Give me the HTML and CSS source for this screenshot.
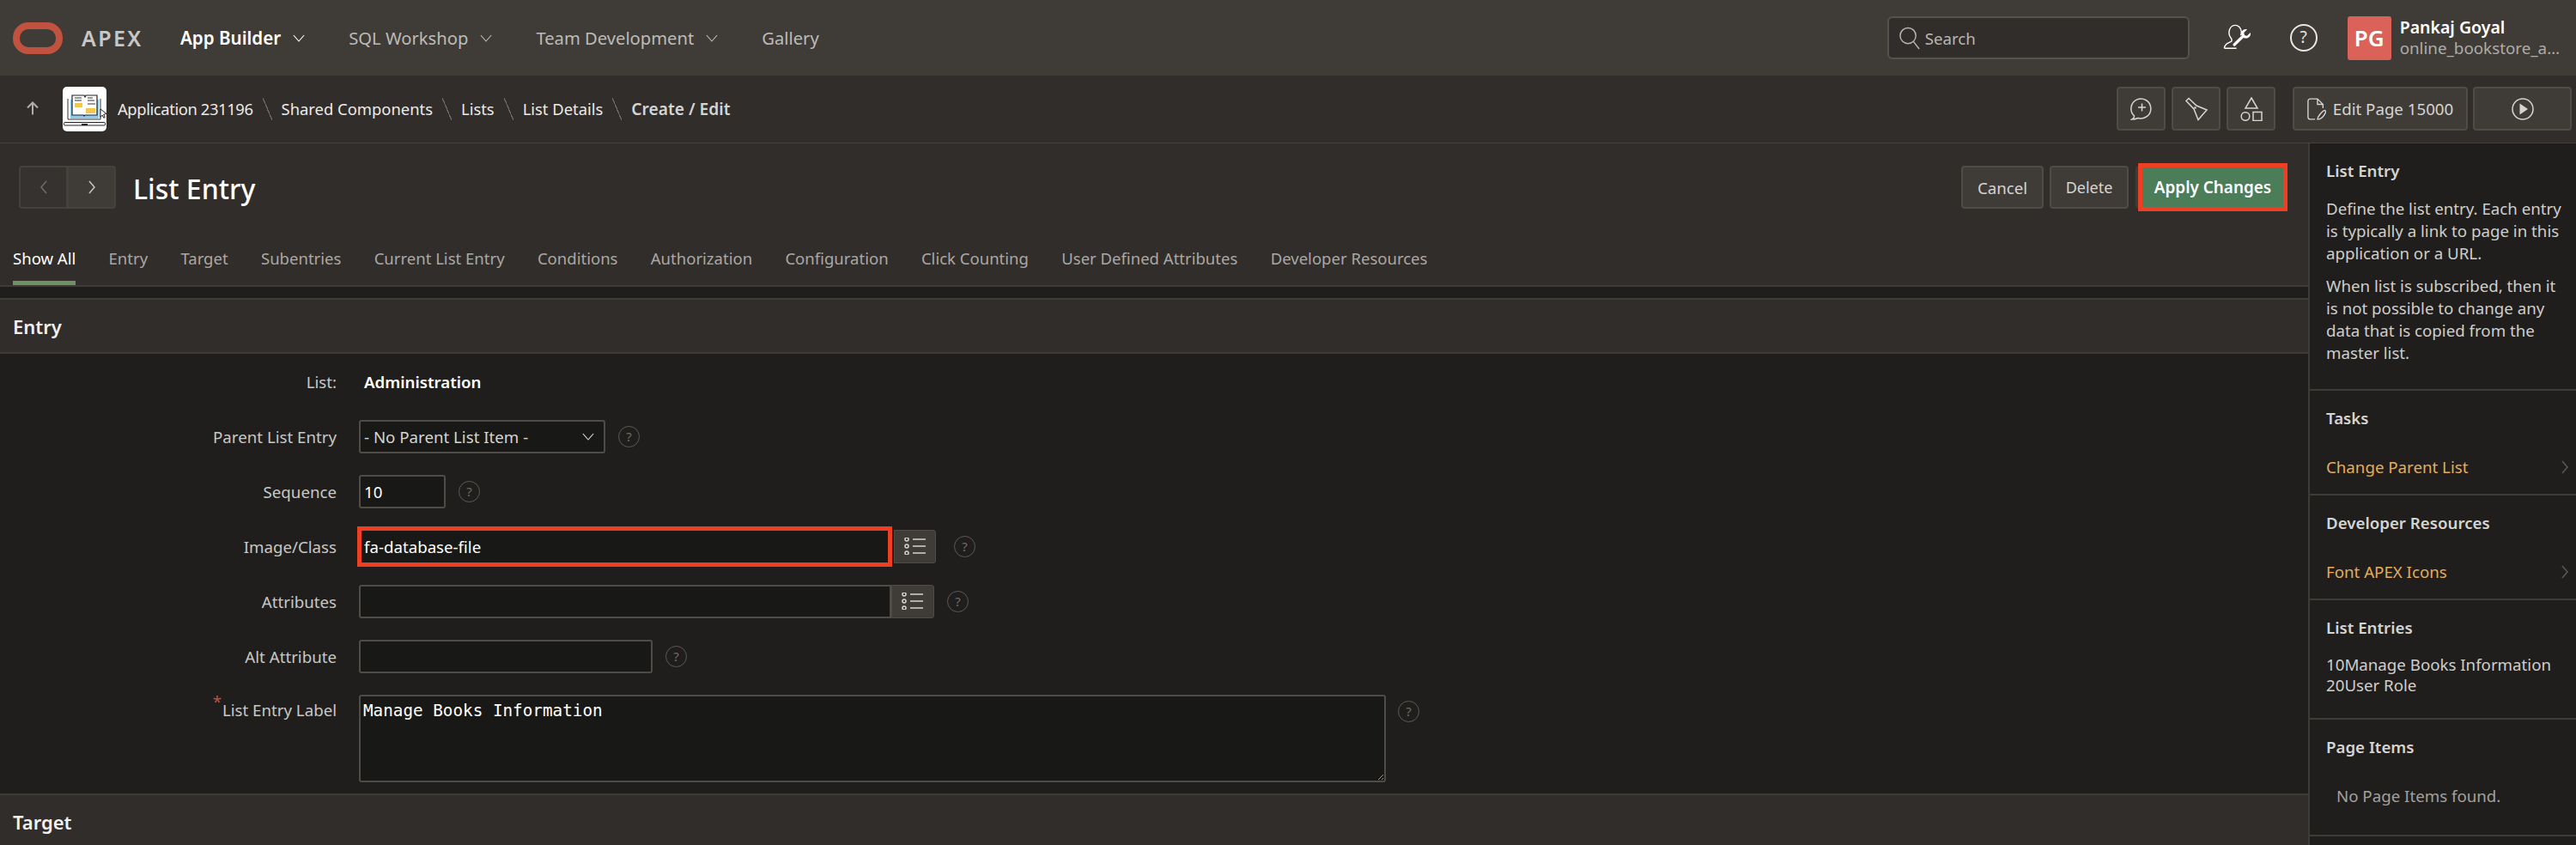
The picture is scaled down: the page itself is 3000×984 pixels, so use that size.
FILE: index.html
```html
<!DOCTYPE html>
<html lang="en">
<head>
    <meta charset="UTF-8">
    <title>List Entry</title>
    <link rel="stylesheet" href="styles.css">
</head>
<body>
    <!-- Top bar -->
    <header class="topbar">
        <div class="logo"></div>
        <div class="brand">APEX</div>
        <nav class="mainnav">
            <a class="navitem active">App Builder <svg class="chev" viewBox="0 0 16 10"><path d="M1 1l7 8 7-8"/></svg></a>
            <a class="navitem">SQL Workshop <svg class="chev" viewBox="0 0 16 10"><path d="M1 1l7 8 7-8"/></svg></a>
            <a class="navitem">Team Development <svg class="chev" viewBox="0 0 16 10"><path d="M1 1l7 8 7-8"/></svg></a>
            <a class="navitem">Gallery</a>
        </nav>
        <div class="search">
            <svg class="search-icon" viewBox="0 0 26 28"><circle cx="11" cy="11" r="9.500"/><path d="M17.500 18l7 9"/></svg>
            <span>Search</span>
        </div>
        <svg class="usertool" viewBox="0 0 36 34"><path d="M1.500 30c0-5 4-6 8-8 1.500-.8 1.500-3 .5-4.200-2.200-2.500-3-5.300-2.600-8.300C8 5 11 1.500 15 1.500s7 3.500 7.500 7.500c.2 1.800 0 3.500-.7 5M1.500 30h15"/><path class="fill" d="M33.800 10.500l-4.300 4-3-.8-.8-3 4-4c-3-1-6.300.8-7 3.700-.3 1.300-.1 2.500.4 3.600L12.500 24.500c-1.300 1.300.8 3.700 2.300 2.500L25.200 17c3.200 1.400 7 .2 8.400-3 .4-1 .5-2.400.2-3.500z"/></svg>
        <div class="help-top">?</div>
        <div class="avatar">PG</div>
        <div class="userinfo">
            <div class="username">Pankaj Goyal</div>
            <div class="userapp">online_bookstore_a…</div>
        </div>
    </header>

    <!-- Breadcrumb bar -->
    <div class="subbar">
        <svg class="uparrow" viewBox="0 0 14 16"><path d="M7 15.500V1.500M1 7.500l6-6 6 6"/></svg>
        <svg class="appicon" viewBox="0 0 51 52">
            <rect width="51" height="52" rx="5" fill="#fff" stroke="none"/>
            <path d="M6 14v24h38V14" fill="none" stroke="#333" stroke-width="1"/>
            <rect x="9" y="15" width="33" height="22" fill="#8ecbee" stroke="none"/>
            <path d="M11 10h14l1 2 1-2h13v23H26l-1 1-1-1H11z" fill="#fff" stroke="#222" stroke-width="1.200"/>
            <path d="M14 13h8M14 16h8M29 13h6M29 16h8M29 20h9" stroke="#333" stroke-width="1"/>
            <rect x="14" y="19" width="9" height="5" fill="#f4c64e" stroke="none"/>
            <rect x="27" y="25" width="11" height="6" fill="#f4c64e" stroke="none"/>
            <rect x="1.500" y="41.500" width="48" height="3.500" rx="1" fill="#fff" stroke="#222" stroke-width="1"/>
            <rect x="22" y="43" width="7" height="2" fill="#222" stroke="none"/>
            <path d="M44 26l7 5.500-3.300.8 1.600 3.200-1.500.8-1.700-3.200-2.200 2.400z" fill="#fff" stroke="#222" stroke-width="1"/>
        </svg>
        <a class="crumb app">Application 231196</a><i class="slash"></i>
        <a class="crumb">Shared Components</a><i class="slash"></i>
        <a class="crumb">Lists</a><i class="slash"></i>
        <a class="crumb">List Details</a><i class="slash"></i>
        <span class="crumb current">Create / Edit</span>
        <div class="subbar-tools">
            <button class="tool">
                <svg viewBox="0 0 26 28"><path d="M2 26c1.800-1 2.500-2 2.600-4A11.500 11.500 0 1 1 9 24.500c-2 .8-4.500 1.500-7 1.500z"/><path d="M13.500 7.500v9M9 12h9"/></svg>
            </button>
            <button class="tool">
                <svg viewBox="0 0 26 28"><path d="M1 4.500L4 1.500l9 8.500 12 5-10 11.500-5-12.500z"/><circle cx="11.500" cy="12.500" r=".6"/></svg>
            </button>
            <button class="tool">
                <svg viewBox="0 0 26 28"><path d="M13 1l7 12H6z"/><circle cx="6" cy="22.500" r="4.800"/><rect x="15" y="17.500" width="10" height="10"/></svg>
            </button>
            <button class="tool wide">
                <svg class="pageicon" viewBox="0 0 24 28"><path d="M10 27H4a3 3 0 0 1-3-3V4a3 3 0 0 1 3-3h9l7 7v5M13 1v7h7"/><path d="M13 27c0-3 5-9 8-11 2-1 3 1 2 3-1.500 3-5 7-8 8z"/></svg>
                Edit Page 15000
            </button>
            <button class="tool run">
                <svg viewBox="0 0 26 26"><circle cx="13" cy="13" r="12"/><path class="fill" d="M9.500 6.500L19 13l-9.500 6.500z"/></svg>
            </button>
        </div>
    </div>

    <div class="content">
        <main class="main">
            <div class="titlebar">
                <div class="pager">
                    <button class="pagebtn"><svg viewBox="0 0 10 16"><path d="M8 1L2 8l6 7"/></svg></button>
                    <button class="pagebtn next"><svg viewBox="0 0 10 16"><path d="M2 1l6 7-6 7"/></svg></button>
                </div>
                <h1>List Entry</h1>
                <div class="actions">
                    <button class="btn cancel">Cancel</button>
                    <button class="btn delete">Delete</button>
                    <div class="apply-wrap"><button class="btn-apply">Apply Changes</button></div>
                </div>
            </div>

            <div class="tabs">
                <a class="tab selected">Show All</a>
                <a class="tab">Entry</a>
                <a class="tab">Target</a>
                <a class="tab">Subentries</a>
                <a class="tab">Current List Entry</a>
                <a class="tab">Conditions</a>
                <a class="tab">Authorization</a>
                <a class="tab">Configuration</a>
                <a class="tab">Click Counting</a>
                <a class="tab">User Defined Attributes</a>
                <a class="tab">Developer Resources</a>
            </div>

            <h2 class="region-head first">Entry</h2>
            <div class="form">
                <div class="row">
                    <label>List:</label>
                    <strong class="readonly">Administration</strong>
                </div>
                <div class="row">
                    <label>Parent List Entry</label>
                    <div class="select">
                        <span>- No Parent List Item -</span>
                        <svg class="chev" viewBox="0 0 16 10"><path d="M1 1l7 8 7-8"/></svg>
                    </div>
                    <span class="help">?</span>
                </div>
                <div class="row">
                    <label>Sequence</label>
                    <input class="field seq" type="text" value="10">
                    <span class="help">?</span>
                </div>
                <div class="row">
                    <label>Image/Class</label>
                    <input class="field marked" type="text" value="fa-database-file">
                    <button class="listbtn"><svg viewBox="0 0 26 20"><circle cx="3" cy="2" r="2"/><circle cx="3" cy="10" r="2"/><circle cx="3" cy="18" r="2"/><path d="M10 2h15M10 10h15M10 18h15"/></svg></button>
                    <span class="help wide-gap">?</span>
                </div>
                <div class="row">
                    <label>Attributes</label>
                    <input class="field attr" type="text">
                    <button class="listbtn joined"><svg viewBox="0 0 26 20"><circle cx="3" cy="2" r="2"/><circle cx="3" cy="10" r="2"/><circle cx="3" cy="18" r="2"/><path d="M10 2h15M10 10h15M10 18h15"/></svg></button>
                    <span class="help">?</span>
                </div>
                <div class="row">
                    <label>Alt Attribute</label>
                    <input class="field alt" type="text">
                    <span class="help">?</span>
                </div>
                <div class="row tall">
                    <label class="required">List Entry Label</label>
                    <textarea class="field area">Manage Books Information</textarea>
                    <span class="help">?</span>
                </div>
            </div>
            <h2 class="region-head">Target</h2>
        </main>

        <aside class="side">
            <section class="side-sec intro">
                <h3>List Entry</h3>
                <p>Define the list entry. Each entry is typically a link to page in this application or a URL.</p>
                <p>When list is subscribed, then it is not possible to change any data that is copied from the master list.</p>
            </section>
            <section class="side-sec">
                <h3>Tasks</h3>
                <a class="side-link">Change Parent List <svg viewBox="0 0 10 16"><path d="M2 1l6 7-6 7"/></svg></a>
            </section>
            <section class="side-sec">
                <h3>Developer Resources</h3>
                <a class="side-link">Font APEX Icons <svg viewBox="0 0 10 16"><path d="M2 1l6 7-6 7"/></svg></a>
            </section>
            <section class="side-sec entries">
                <h3>List Entries</h3>
                <div class="entry-list">10Manage Books Information<br>20User Role</div>
            </section>
            <section class="side-sec items">
                <h3>Page Items</h3>
                <div class="no-items">No Page Items found.</div>
            </section>
        </aside>
    </div>
</body>
</html>
```

FILE: styles.css
```css
/* Base */
* {
    box-sizing: border-box;
}

html {
    height: 984px;
    overflow: hidden;
}

body {
    margin: 0;
    height: 984px;
    overflow: hidden;
    display: flex;
    flex-direction: column;
    font-family: "Noto Sans", "Open Sans", sans-serif;
    font-size: 18.7px;
    color: #d6d4d1;
    background-color: #1f1e1d;
}

svg {
    fill: none;
    stroke: currentColor;
    stroke-width: 1.5;
    display: block;
}

svg .fill {
    fill: currentColor;
    stroke: none;
}

.chev {
    width: 14px;
    height: 9px;
    stroke-width: 1.3;
}

/* Top bar */
.topbar {
    height: 88px;
    flex: none;
    display: flex;
    align-items: center;
    padding: 0 19px 0 15px;
    background-color: #3f3c38;
}

.logo {
    width: 58px;
    height: 37px;
    border: 8px solid #c0523f;
    border-radius: 18px;
}

.brand {
    margin-left: 22px;
    width: 115px;
    font-size: 25px;
    font-weight: 600;
    letter-spacing: 2.4px;
    color: #c9c7c4;
}

.mainnav {
    display: flex;
    align-items: center;
    gap: 51px;
}

.navitem {
    display: flex;
    align-items: center;
    gap: 14px;
    font-size: 20.2px;
    color: #bdbbb7;
}

.navitem.active {
    font-size: 20.6px;
    font-weight: 600;
    color: #fff;
}

.search {
    margin-left: auto;
    width: 352px;
    height: 50px;
    display: flex;
    align-items: center;
    gap: 5px;
    padding-left: 11px;
    color: #b8b6b2;
    background-color: #312d2a;
    border: 2px solid #55524e;
    border-radius: 6px;
}

.search-icon {
    width: 26px;
    height: 27px;
}

.usertool {
    width: 34px;
    height: 32px;
    margin-left: 39px;
    color: #fff;
}

.help-top {
    width: 32px;
    height: 32px;
    margin-left: 44px;
    border: 2px solid #e8e6e3;
    border-radius: 50%;
    text-align: center;
    font-size: 19px;
    line-height: 27px;
    color: #e8e6e3;
}

.avatar {
    width: 51px;
    height: 51px;
    margin-left: 35px;
    display: flex;
    align-items: center;
    justify-content: center;
    border-radius: 3px;
    font-size: 26px;
    font-weight: 600;
    color: #fff;
    background-color: #da6258;
}

.userinfo {
    margin-left: 10px;
    line-height: 25px;
}

.username {
    font-size: 19.5px;
    font-weight: 600;
    color: #fff;
}

.userapp {
    font-size: 18.8px;
    color: #aeaca8;
}

/* Breadcrumb bar */
.subbar {
    height: 79px;
    flex: none;
    display: flex;
    align-items: center;
    padding: 0 5px 1px 31px;
    background-color: #312d2a;
    border-bottom: 1px solid #45423e;
}

.uparrow {
    width: 14px;
    height: 16px;
    margin-top: -2px;
    stroke-width: 2;
    color: #b0aeaa;
}

.appicon {
    width: 51px;
    height: 52px;
    margin: 0 13px 0 28px;
}

.crumb {
    font-size: 18.4px;
    color: #eceae7;
}

.crumb.app {
    letter-spacing: -0.4px;
}

.crumb.current {
    font-size: 19.2px;
    font-weight: 600;
    color: #d6d4d1;
}

.slash {
    width: 11px;
    height: 26px;
    margin: 0 11px;
    background: linear-gradient(to bottom left, transparent 47%, #6e6b66 47%, #6e6b66 53%, transparent 53%);
}

.subbar-tools {
    margin-left: auto;
    display: flex;
    gap: 7px;
}

.tool {
    width: 57px;
    height: 51px;
    display: flex;
    align-items: center;
    justify-content: center;
    gap: 8px;
    padding: 0;
    font-family: inherit;
    font-size: 18.7px;
    color: #d6d4d1;
    background-color: #3f3c38;
    border: 2px solid #4f4c48;
    border-radius: 4px;
}

.tool svg {
    width: 26px;
    height: 28px;
}

.tool.wide {
    width: 204px;
    margin-left: 13px;
}

.tool .pageicon {
    width: 22px;
    height: 28px;
}

.tool.run {
    width: 115px;
    margin-left: -1px;
}

/* Main column */
.content {
    flex: 1;
    display: flex;
    min-height: 0;
}

.main {
    width: 2688px;
    flex: none;
    overflow: hidden;
}

.titlebar {
    height: 113px;
    display: flex;
    align-items: flex-start;
    padding: 26px 24px 0 22px;
    background-color: #312d2a;
}

.pager {
    display: flex;
}

.pagebtn {
    width: 57px;
    height: 50px;
    display: flex;
    align-items: center;
    justify-content: center;
    padding: 0;
    color: #706d68;
    background-color: #35322f;
    border: 2px solid #45423e;
    border-radius: 4px 0 0 4px;
}

.pagebtn svg {
    width: 10px;
    height: 16px;
}

.pagebtn.next {
    margin-left: -1px;
    color: #c8c6c2;
    background-color: #3f3c38;
    border-radius: 0 4px 4px 0;
}

h1 {
    margin: 0 0 0 20px;
    font-size: 32px;
    font-weight: 500;
    line-height: 54px;
    color: #fff;
}

.actions {
    margin-left: auto;
    display: flex;
    align-items: center;
    gap: 7px;
}

.btn {
    height: 50px;
    padding: 0;
    font-family: inherit;
    font-size: 18.7px;
    color: #d6d4d1;
    background-color: #3f3c38;
    border: 2px solid #4f4c48;
    border-radius: 4px;
}

.btn.cancel {
    width: 96px;
}

.btn.delete {
    width: 92px;
    font-size: 18px;
}

.apply-wrap {
    height: 50px;
    margin-left: 1px;
    padding-left: 3px;
    display: flex;
    align-items: center;
    background-color: #3f3c38;
    border-radius: 4px 0 0 4px;
}

.btn-apply {
    width: 174px;
    height: 56px;
    padding: 0;
    font-family: inherit;
    font-size: 18.9px;
    font-weight: 600;
    color: #fff;
    background-color: #4b7d58;
    border: 5px solid #ee3f23;
}

/* Tabs */
.tabs {
    height: 54px;
    display: flex;
    gap: 38.3px;
    padding-left: 15px;
    font-size: 18.55px;
    background-color: #312d2a;
    border-bottom: 2px solid #3f3c38;
}

.tab {
    height: 52px;
    padding-top: 8px;
    color: #aaa8a4;
}

.tab.selected {
    color: #fff;
    border-bottom: 5px solid #6f9265;
}

/* Regions */
.region-head {
    height: 65px;
    margin: 0;
    padding: 0 15px;
    display: flex;
    align-items: center;
    font-size: 22px;
    font-weight: 600;
    color: #f2f0ed;
    background-color: #312d2a;
    border-top: 2px solid #3f3c38;
    border-bottom: 2px solid #3f3c38;
}

.region-head.first {
    margin-top: 13px;
}

.row {
    height: 64px;
    display: flex;
    align-items: center;
}

.row.tall {
    height: 128px;
    align-items: flex-start;
    padding-top: 13px;
}

.row label {
    width: 392px;
    margin-right: 26px;
    text-align: right;
    color: #c9c7c4;
}

.row.tall label {
    position: relative;
    margin-top: 5px;
}

.required::before {
    content: "*";
    position: absolute;
    right: 134px;
    top: -10px;
    color: #c0523f;
}

.readonly {
    margin-left: 6px;
    font-weight: 600;
    color: #fff;
}

.select {
    width: 287px;
    height: 39px;
    display: flex;
    align-items: center;
    justify-content: space-between;
    padding: 0 11px 0 4px;
    color: #d6d4d1;
    background-color: #181816;
    border: 2px solid #4f4c48;
    border-radius: 3px;
}

.field {
    height: 39px;
    padding: 0 4px;
    font-family: inherit;
    font-size: 18.7px;
    color: #fff;
    background-color: #181816;
    border: 2px solid #4f4c48;
    border-radius: 3px;
    outline: none;
}

.seq {
    width: 101px;
}

.marked {
    width: 623px;
    height: 47px;
    margin-left: -2px;
    padding-left: 3px;
    border: 5px solid #ee3f23;
    border-radius: 0;
}

.attr {
    width: 620px;
    border-radius: 3px 0 0 3px;
}

.alt {
    width: 342px;
}

.area {
    width: 1196px;
    height: 102px;
    padding: 6px 3px;
    font-family: "DejaVu Sans Mono", "Liberation Mono", monospace;
    font-size: 19.3px;
    line-height: 22px;
}

.listbtn {
    width: 49px;
    height: 39px;
    display: flex;
    align-items: center;
    justify-content: center;
    margin-left: 2px;
    padding: 0;
    color: #d6d4d1;
    background-color: #3f3c38;
    border: 1px solid #4f4c48;
    border-radius: 0 3px 3px 0;
}

.listbtn.joined {
    width: 50px;
    margin-left: 0;
}

.listbtn svg {
    width: 26px;
    height: 20px;
}

.help {
    width: 25px;
    height: 25px;
    margin-left: 15px;
    flex: none;
    border: 1.5px solid #5c5955;
    border-radius: 50%;
    text-align: center;
    font-size: 15px;
    line-height: 22px;
    color: #6e6b66;
}

.help.wide-gap {
    margin-left: 21px;
}

.row.tall .help {
    margin-top: 7px;
    margin-left: 14px;
}

/* Right side panel */
.side {
    flex: 1;
    overflow: hidden;
    border-left: 2px solid #3f3c38;
    background-color: #1f1e1d;
    line-height: 26px;
}

.side-sec {
    height: 122px;
    padding: 19px 0 0 19px;
    border-bottom: 2px solid #3f3c38;
}

.side-sec.intro {
    height: 288px;
}

.side-sec.entries {
    height: 139px;
}

.side-sec.items {
    height: 136px;
}

.side h3 {
    margin: 0 0 31px;
    font-size: 18.7px;
    font-weight: 600;
    line-height: 26px;
    color: #d6d4d1;
}

.side p {
    margin: 0 16px 12px 0;
    color: #d0cecb;
}

.side-sec.intro h3 {
    margin-bottom: 18px;
}

.side-link {
    display: flex;
    align-items: center;
    justify-content: space-between;
    padding-right: 8px;
    color: #e2ad5c;
}

.side-link svg {
    width: 10px;
    height: 16px;
    color: #5c5955;
}

.entry-list {
    margin-top: -13px;
    line-height: 24px;
    color: #d0cecb;
}

.no-items {
    padding-left: 12px;
    color: #a3a19d;
}
```
